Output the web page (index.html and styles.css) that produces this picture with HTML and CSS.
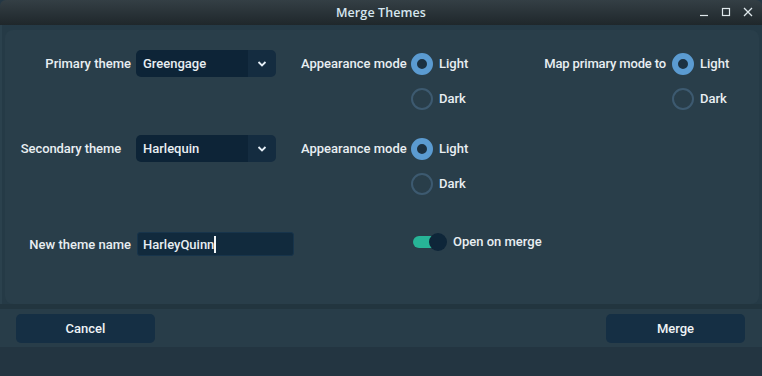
FILE: index.html
```html
<!DOCTYPE html>
<html>
<head>
<meta charset="utf-8">
<link rel="stylesheet" href="styles.css">
</head>
<body>
<div class="window">
  <div class="titlebar">
    <div class="title">Merge Themes</div>
    <div class="controls">
      <svg class="ctl" width="10" height="10" viewBox="0 0 10 10"><path d="M1 8.5H9" stroke="#dfe8ec" stroke-width="1.2"/></svg>
      <svg class="ctl" width="10" height="10" viewBox="0 0 10 10"><rect x="1.5" y="1.5" width="7" height="7" fill="none" stroke="#dfe8ec" stroke-width="1.2"/></svg>
      <svg class="ctl" width="10" height="10" viewBox="0 0 10 10"><path d="M1 1L9 9M9 1L1 9" stroke="#dfe8ec" stroke-width="1.3"/></svg>
    </div>
  </div>
  <div class="body">
    <div class="frame">
      <div class="section first">
        <div class="label right">Primary theme</div>
        <div class="cell"><div class="combo"><span class="combo-text">Greengage</span><span class="combo-btn"><svg width="10" height="6" viewBox="0 0 10 6"><path d="M1.5 1L5 4.5L8.5 1" fill="none" stroke="#e4eef6" stroke-width="1.8"/></svg></span></div></div>
        <div class="label">Appearance mode</div>
        <div class="radio"><span class="dot on"></span><span>Light</span></div>
        <div class="label right map">Map primary mode to</div>
        <div class="radio"><span class="dot on"></span><span>Light</span></div>
        <div></div><div></div><div></div>
        <div class="radio"><span class="dot"></span><span>Dark</span></div>
        <div></div>
        <div class="radio"><span class="dot"></span><span>Dark</span></div>
      </div>
      <div class="section second">
        <div class="label right sec">Secondary theme</div>
        <div class="cell"><div class="combo"><span class="combo-text">Harlequin</span><span class="combo-btn"><svg width="10" height="6" viewBox="0 0 10 6"><path d="M1.5 1L5 4.5L8.5 1" fill="none" stroke="#e4eef6" stroke-width="1.8"/></svg></span></div></div>
        <div class="label">Appearance mode</div>
        <div class="radio"><span class="dot on"></span><span>Light</span></div>
        <div></div><div></div>
        <div></div><div></div><div></div>
        <div class="radio"><span class="dot"></span><span>Dark</span></div>
      </div>
      <div class="section third">
        <div class="label right">New theme name</div>
        <div class="cell"><div class="input"><span>HarleyQuinn</span><span class="caret"></span></div></div>
        <div></div>
        <div class="toggle-wrap"><span class="toggle"><span class="knob"></span></span><span>Open on merge</span></div>
      </div>
    </div>
    <div class="strip"></div>
    <div class="buttons">
      <button class="btn">Cancel</button>
      <button class="btn">Merge</button>
    </div>
    <div class="footer"></div>
  </div>
</div>
</body>
</html>
```
FILE: styles.css
```css
html, body {
  margin: 0;
  padding: 0;
  width: 762px;
  height: 376px;
  overflow: hidden;
  background: #243744;
}
.window {
  width: 762px;
  height: 376px;
  display: flex;
  flex-direction: column;
  font-family: Roboto, "Liberation Sans", sans-serif;
  font-size: 13px;
  font-weight: 500;
  color: #e8eef2;
}
.titlebar {
  height: 25px;
  flex: none;
  background: linear-gradient(#343f45, #1f272b);
  border-radius: 6px 6px 0 0;
  display: flex;
  align-items: center;
  justify-content: center;
  position: relative;
}
.title {
  font-family: "Open Sans", "DejaVu Sans", sans-serif;
  font-size: 12.5px;
  font-weight: 600;
  color: #d6e6ef;
  letter-spacing: 0.1px;
}
.controls {
  position: absolute;
  right: 9px;
  top: 7px;
  display: flex;
  gap: 12px;
}
.ctl { display: block; }
.body {
  flex: 1;
  display: flex;
  flex-direction: column;
  background: #253a46;
  border-left: 2px solid #2b414d;
}
.frame {
  margin: 5px 3px 0 3px;
  height: 274px;
  background: #293e4a;
  border-radius: 8px;
  box-sizing: border-box;
  padding-top: 20px;
}
.section {
  display: grid;
  grid-template-columns: 126px 170px 110px 129px 132px auto;
  grid-auto-rows: 27px;
  row-gap: 8px;
  align-items: center;
}
.second { margin-top: 23px; }
.third { margin-top: 35px; grid-auto-rows: 24px; }
.label { white-space: nowrap; }
.label.right { text-align: right; }
.label.sec { padding-right: 10px; letter-spacing: -0.1px; }
.label.map { padding-right: 6px; letter-spacing: -0.15px; }
.cell { padding-left: 5px; }
.combo {
  width: 140px;
  height: 27px;
  display: flex;
  border-radius: 5px;
  overflow: hidden;
}
.combo-text {
  flex: 1;
  background: #0d2437;
  display: flex;
  align-items: center;
  padding-left: 7px;
}
.combo-btn {
  width: 28px;
  background: #142c40;
  display: flex;
  align-items: center;
  justify-content: center;
}
.combo-btn svg { display: block; margin-top: 1px; }
.radio {
  display: flex;
  align-items: center;
  gap: 6px;
}
.dot {
  width: 22px;
  height: 22px;
  box-sizing: border-box;
  border-radius: 50%;
  border: 2px solid #3d5a70;
  flex: none;
}
.dot.on {
  border: 6.5px solid #5b9bd1;
  background: #1c3141;
}
.input {
  margin-left: 1px;
  width: 157px;
  height: 24px;
  box-sizing: border-box;
  background: #112a3d;
  border: 1px solid #17344b;
  border-radius: 3px;
  display: flex;
  align-items: center;
  padding-left: 5px;
}
.caret {
  width: 1.5px;
  height: 17px;
  background: #f2f6f8;
}
.toggle-wrap {
  grid-column: 4 / 6;
  display: flex;
  align-items: center;
  gap: 6px;
  padding-left: 2px;
  margin-top: -5px;
}
.toggle {
  width: 34px;
  height: 17px;
  position: relative;
  flex: none;
}
.toggle::before {
  content: "";
  position: absolute;
  left: 0;
  top: 3px;
  width: 27px;
  height: 12px;
  border-radius: 6px;
  background: #27b497;
}
.knob {
  position: absolute;
  right: 0;
  top: 0;
  width: 18px;
  height: 18px;
  border-radius: 50%;
  background: #0e2639;
}
.strip {
  height: 5px;
  background: #22353f;
  margin-left: -2px;
}
.buttons {
  height: 38px;
  background: #283d49;
  display: flex;
  justify-content: space-between;
  align-items: center;
  padding: 0 17px 0 16px;
  margin-left: -2px;
}
.btn {
  width: 139px;
  height: 29px;
  border: none;
  border-radius: 5px;
  background: #152f44;
  color: #eef3f6;
  font-family: Roboto, "Liberation Sans", sans-serif;
  font-size: 13px;
  font-weight: 500;
  padding: 0;
}
.footer {
  flex: 1;
  background: #233541;
  margin-left: -2px;
}
```
